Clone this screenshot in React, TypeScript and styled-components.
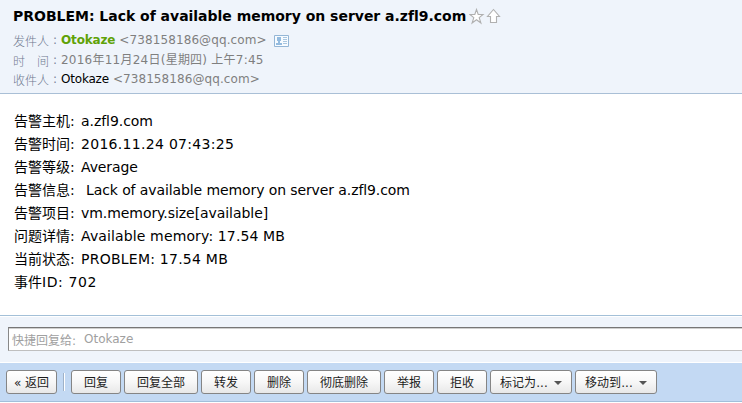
import React from 'react';
import styled, { createGlobalStyle } from 'styled-components';

const Global = createGlobalStyle`
  html, body { margin: 0; padding: 0; background: #fff; overflow: hidden; }
  * { box-sizing: border-box; }
`;

const Page = styled.main`
  width: 100%;
  height: 403px;
  display: flex;
  flex-direction: column;
  overflow: hidden;
  color: #000;
  font-family: 'DejaVu Sans', 'Noto Sans CJK SC', sans-serif;
  white-space: pre;
`;

const Header = styled.header`
  height: 94px;
  flex: none;
  padding: 6px 0 0 13px;
  background: #eff4fb;
  border-bottom: 1px solid #a9bfd6;
`;

const TitleRow = styled.div`
  display: flex;
  align-items: center;
  height: 20px;
  margin-bottom: 5px;
`;

const Title = styled.h1`
  margin: 0;
  width: 456px;
  font-size: 14px;
  line-height: 20px;
  font-weight: bold;
  letter-spacing: -0.02px;
`;

const MetaRow = styled.div<{ $height: number }>`
  display: flex;
  align-items: center;
  height: ${(p) => p.$height}px;
  font-size: 12px;
  line-height: 19px;
  color: #7f7f7f;
`;

const MetaLabel = styled.span`
  display: flex;
  width: 36px;
  justify-content: space-between;
  color: #707a90;
  font-family: 'Noto Sans CJK SC', sans-serif;
  font-weight: 300;
`;

const Colon = styled.span`
  width: 12px;
  padding-left: 4px;
  color: #7b8499;
`;

const Text = styled.span<{ $spacing?: number; $color?: string; $bold?: boolean }>`
  letter-spacing: ${(p) => p.$spacing ?? 0}px;
  color: ${(p) => p.$color ?? 'inherit'};
  font-weight: ${(p) => (p.$bold ? 'bold' : 'inherit')};
`;

const Address = styled(Text)`
  margin-left: 4px;
`;

const TitleIcon = styled.svg`
  width: 17px;
  height: 18px;
  flex: none;
`;

const CardIcon = styled.svg`
  width: 15px;
  height: 12px;
  margin-left: 7px;
  flex: none;
`;

const Body = styled.section`
  height: 221px;
  flex: none;
  padding: 16px 0 0 14px;
`;

const BodyRow = styled.div`
  display: flex;
  height: 23px;
  font-size: 14px;
  line-height: 23px;
`;

const BodyLabel = styled.span`
  width: 67px;
  flex: none;
`;

const Reply = styled.section`
  height: 48px;
  flex: none;
  display: flex;
  padding: 10px 0 0 8px;
  background: #eff4fb;
  border-top: 1px solid #a3c0d8;
  border-bottom: 1px solid #fff;
  box-shadow: inset 0 1px #fff;
`;

const ReplyField = styled.div`
  flex: 1;
  height: 24px;
  margin-top: 1px;
  padding-left: 3px;
  display: flex;
  align-items: center;
  background: #fff;
  border: solid;
  border-width: 1px 0 1px 1px;
  border-color: #767676 #c0c0c0 #bfbfbf #888;
  box-shadow: inset 0 1px #cfcfcf;
  color: #a0a0a0;
  font-size: 12px;
`;

const ReplyPrompt = styled.span`
  width: 72px;
`;

const Toolbar = styled.nav`
  height: 39px;
  flex: none;
  display: flex;
  gap: 3px;
  padding: 7px 0 0 6px;
  background: #c3d9f3;
  border-bottom: 1px solid #a2bfda;
`;

const Button = styled.button<{ $width: number }>`
  width: ${(p) => p.$width}px;
  height: 24px;
  flex: none;
  display: flex;
  align-items: center;
  justify-content: center;
  padding: 1px 0 0;
  border: 1px solid #858585;
  border-radius: 3px;
  background: linear-gradient(#fff, #f7f7f7 50%, #e8e8e8);
  color: #1c1c1c;
  font: 12px/20px 'DejaVu Sans', 'Noto Sans CJK SC', sans-serif;
  white-space: pre;
`;

const Separator = styled.i`
  width: 2px;
  height: 18px;
  margin: 3px 3px 0 3px;
  border-left: 1px solid #9fb2c8;
  border-right: 1px solid #fff;
`;

const Caret = styled.i`
  margin: 0 0 0 6px;
  border: 4px solid transparent;
  border-top-color: #555;
  border-bottom: 0;
`;

const Dots = styled.span`
  width: 12px;
  letter-spacing: 0.1px;
`;

type Row = { label: string; value: string; spacing: number; indent?: boolean };

const rows: Row[] = [
  { label: '告警主机:', value: 'a.zfl9.com', spacing: -0.05 },
  { label: '告警时间:', value: '2016.11.24 07:43:25', spacing: 0.3 },
  { label: '告警等级:', value: 'Average', spacing: -0.1 },
  { label: '告警信息:', value: 'Lack of available memory on server a.zfl9.com', spacing: -0.1, indent: true },
  { label: '告警项目:', value: 'vm.memory.size[available]', spacing: -0.06 },
  { label: '问题详情:', value: 'Available memory: 17.54 MB', spacing: 0.13 },
  { label: '当前状态:', value: 'PROBLEM: 17.54 MB', spacing: 0.24 },
];

const Indented = styled(Text)`
  margin-left: 5px;
`;

const actions: { label: string; width: number; menu?: boolean }[] = [
  { label: '回复', width: 50 },
  { label: '回复全部', width: 74 },
  { label: '转发', width: 50 },
  { label: '删除', width: 50 },
  { label: '彻底删除', width: 74 },
  { label: '举报', width: 50 },
  { label: '拒收', width: 50 },
  { label: '标记为', width: 82, menu: true },
  { label: '移动到', width: 82, menu: true },
];

export default function App() {
  return (
    <Page>
      <Global />
      <Header>
        <TitleRow>
          <Title>PROBLEM: Lack of available memory on server a.zfl9.com</Title>
          <TitleIcon viewBox="0 0 17 18" fill="#fff" stroke="#b0b0b0" strokeWidth="1.1">
            <path d="M7.5 2.5 9.2 7.5H14L10.2 10.6 11.9 16 7.5 12.7 3.1 16 4.8 10.6 1 7.5H5.8z" />
          </TitleIcon>
          <TitleIcon viewBox="0 0 17 18" fill="#fff" stroke="#b0b0b0" strokeWidth="1.1">
            <path d="M7.5 2.5 13.5 9.5H10.5V15.5H4.5V9.5H1.5z" />
          </TitleIcon>
        </TitleRow>
        <MetaRow $height={19}>
          <MetaLabel>发件人</MetaLabel>
          <Colon>:</Colon>
          <Text $bold $color="#5fa207" $spacing={-0.15}>Otokaze</Text>
          <Address $spacing={0.1}>{'<738158186@qq.com>'}</Address>
          <CardIcon viewBox="0 0 15 12">
            <path d="M.5.5h14v11H.5z" fill="#f7fbff" stroke="#94b6d6" />
            <path d="M3 2h4v4H3zM4 6h2v2H4zM2 8h6v2H2z" fill="#94bbdf" />
            <path d="M9 2.5h4M9 4.5h4M9 6.5h4M9 8.5h4" stroke="#a9c6e0" />
          </CardIcon>
        </MetaRow>
        <MetaRow $height={20}>
          <MetaLabel><span>时</span><span>间</span></MetaLabel>
          <Colon>:</Colon>
          <Text $spacing={0.24}>2016年11月24日(星期四) 上午7:45</Text>
        </MetaRow>
        <MetaRow $height={18}>
          <MetaLabel>收件人</MetaLabel>
          <Colon>:</Colon>
          <Text $color="#000" $spacing={-0.2}>Otokaze</Text>
          <Address $spacing={0.08}>{'<738158186@qq.com>'}</Address>
        </MetaRow>
      </Header>
      <Body>
        {rows.map((r) => {
          const Value = r.indent ? Indented : Text;
          return (
            <BodyRow key={r.label}>
              <BodyLabel>{r.label}</BodyLabel>
              <Value $spacing={r.spacing}>{r.value}</Value>
            </BodyRow>
          );
        })}
        <BodyRow><span>事件</span><Text $spacing={0.6}>ID: 702</Text></BodyRow>
      </Body>
      <Reply>
        <ReplyField><ReplyPrompt>快捷回复给:</ReplyPrompt>Otokaze</ReplyField>
      </Reply>
      <Toolbar>
        <Button $width={51}>« 返回</Button>
        <Separator />
        {actions.map((a) => (
          <Button key={a.label} $width={a.width}>
            {a.label}
            {a.menu && <><Dots>...</Dots><Caret /></>}
          </Button>
        ))}
      </Toolbar>
    </Page>
  );
}
